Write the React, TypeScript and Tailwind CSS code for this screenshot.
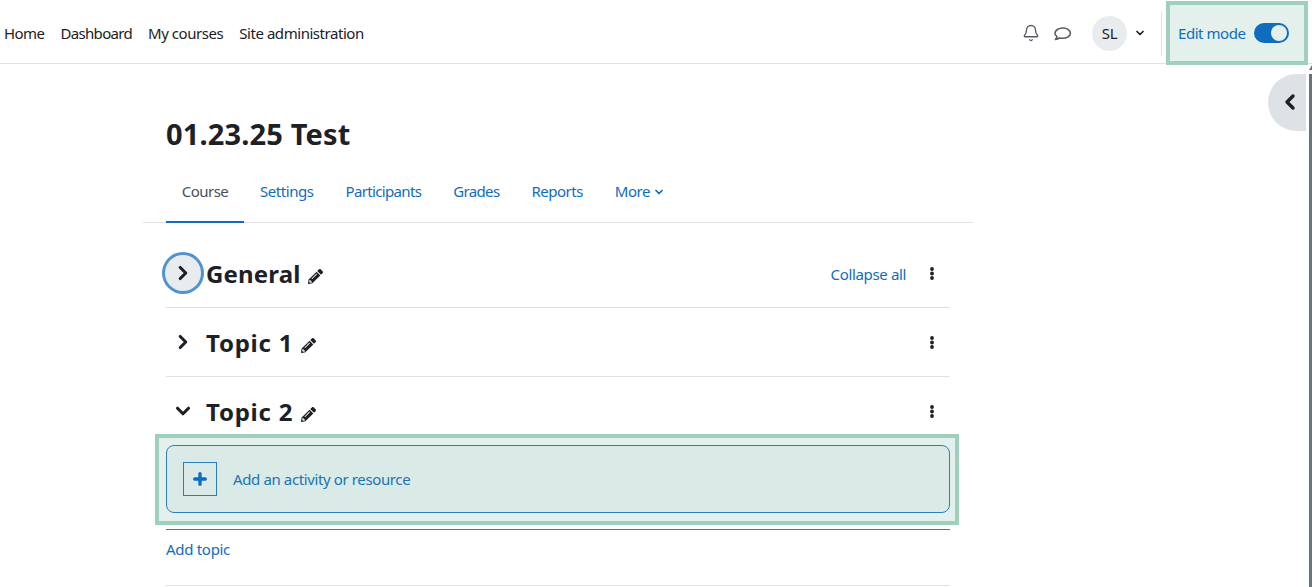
import React from 'react';
import { Bell, ChevronDown, ChevronRight, ChevronLeft, Plus } from 'lucide-react';

const Pencil = ({ className }: { className?: string }) => (
  <svg viewBox="0 0 512 512" className={className} fill="currentColor">
    <path d="M497.9 142.1l-46.1 46.1c-4.7 4.7-12.3 4.7-17 0l-111-111c-4.7-4.7-4.7-12.3 0-17l46.1-46.1c18.7-18.7 49.1-18.7 67.9 0l60.1 60.1c18.8 18.7 18.8 49.1 0 67.9zM284.2 99.8L21.6 362.4.4 483.9c-2.9 16.4 11.4 30.6 27.8 27.8l121.5-21.3 262.6-262.6c4.7-4.7 4.7-12.3 0-17l-111-111c-4.8-4.7-12.4-4.7-17.1 0zM124.1 339.9c-5.5-5.5-5.5-14.3 0-19.8l154-154c5.5-5.5 14.3-5.5 19.8 0s5.5 14.3 0 19.8l-154 154c-5.5 5.5-14.3 5.5-19.8 0zM88 424h48v36.3l-64.5 11.3-31.1-31.1L51.7 376H88v48z" />
  </svg>
);

const Dots = () => (
  <svg viewBox="0 0 4 13" className="h-[13px] w-[4px] text-[#1d2125]" fill="currentColor">
    <circle cx="2" cy="2" r="1.9" />
    <circle cx="2" cy="6.5" r="1.9" />
    <circle cx="2" cy="11" r="1.9" />
  </svg>
);

const Chat = () => (
  <svg viewBox="0 0 18 14" className="ml-[14px] mt-[2px] h-[14px] w-[18px] text-[#555b60]" fill="none" stroke="currentColor" strokeWidth="1.6" strokeLinejoin="round">
    <path d="M9 1C4.6 1 1 3.3 1 6.2c0 1.4.8 2.6 2 3.5-.2 1-.8 2-1.6 2.8 1.6-.1 3-.7 4-1.6.9.3 1.9.4 3 .4 4.4 0 8-2.3 8-5.1S13.4 1 9 1z" />
  </svg>
);

const SectionRow = ({ title, open, focus, right, titleClass }: { title: string; open?: boolean; focus?: boolean; right?: React.ReactNode; titleClass: string }) => (
  <div className="flex h-[68px] items-center">
    <div className={`ml-[-1px] mr-[5px] flex h-[36px] w-[36px] shrink-0 items-center justify-center rounded-full ${focus ? 'bg-[#e9ecef] ring-[3px] ring-[#4f93d1]' : ''}`}>
      {open ? <ChevronDown size={22} strokeWidth={3.4} className="text-[#1d2125]" /> : <ChevronRight size={22} strokeWidth={3.4} className="text-[#1d2125]" />}
    </div>
    <h3 className={`mt-[1px] text-[24px] font-bold leading-none text-[#1d2125] ${titleClass}`}>{title}</h3>
    <Pencil className="ml-[8px] mt-[7px] h-[15px] w-[15px] text-[#1d2125]" />
    <div className="ml-auto flex items-center">
      {right}
      <div className="ml-[24px] mr-[16px] flex">
        <Dots />
      </div>
    </div>
  </div>
);

export default function App() {
  return (
    <div className="relative h-[587px] w-[1312px] overflow-hidden bg-white font-['Noto_Sans',sans-serif] text-[15px] text-[#1d2125]">
      {/* top nav */}
      <nav className="flex h-[64px] items-center border-b border-[#dee2e6] pl-[4px] pt-[3px]">
        <div className="flex gap-[16px]">
          <span className="tracking-[-0.55px]">Home</span>
          <span className="tracking-[-0.68px]">Dashboard</span>
          <span className="tracking-[-0.45px]">My courses</span>
          <span className="tracking-[-0.45px]">Site administration</span>
        </div>
        <div className="ml-auto flex items-center">
          <Bell size={18} strokeWidth={1.8} className="text-[#555b60]" />
          <Chat />
          <div className="ml-[20px] flex h-[35px] w-[35px] items-center justify-center rounded-full bg-[#e9ecef] text-[15px] tracking-[-0.3px]">SL</div>
          <ChevronDown size={12} strokeWidth={3.5} className="ml-[7px]" />
          <div className="ml-[15px] h-[45px] w-px bg-[#dee2e6]" />
          <div className="ml-[4px] mr-[4px] flex h-[64px] w-[142px] items-center border-[4px] border-[#9fd0bd] bg-[#e3f0eb] pl-[8px]">
            <span className="tracking-[-0.45px] text-[#0f6cbf]">Edit mode</span>
            <div className="ml-[8px] flex h-[20px] w-[35px] items-center justify-end rounded-full bg-[#0f6cbf] pr-[2px]">
              <div className="h-[16px] w-[16px] rounded-full bg-[#e3f0eb]" />
            </div>
          </div>
        </div>
      </nav>

      {/* drawer toggle */}
      <div className="absolute left-[1268px] top-[74px] flex h-[57px] w-[38px] items-center rounded-l-full bg-[#dee2e6] pb-[2px] pl-[10px]">
        <ChevronLeft size={24} strokeWidth={3.4} className="text-[#1d2125]" />
      </div>
      <div className="absolute left-[1309px] top-[65px] h-0 w-0 border-x-[3px] border-b-[5px] border-x-transparent border-b-[#6a737b]" />
      <div className="absolute left-[1309px] top-[74px] h-[513px] w-[3px] bg-[#6a737b]" />

      {/* main column */}
      <main className="ml-[143px] w-[830px]">
        <div className="pl-[23px] pt-[52px]">
          <h1 className="text-[29px] font-bold leading-[36px] tracking-[0.15px] text-[#1d2125]">01.23.25 Test</h1>
        </div>
        <div className="mt-[11px] flex h-[60px] border-b border-[#dee2e6] pl-[23px] text-[#0f6cbf]">
          <div className="mb-[-1px] flex w-[78px] items-center justify-center border-b-[2px] border-[#0f6cbf] pb-[2px] tracking-[-0.5px] text-[#495057]">Course</div>
          <div className="ml-[16px] flex items-center pb-[2px] tracking-[-0.45px]">Settings</div>
          <div className="ml-[32px] flex items-center pb-[2px] tracking-[-0.65px]">Participants</div>
          <div className="ml-[32px] flex items-center pb-[2px] tracking-[-0.65px]">Grades</div>
          <div className="ml-[32px] flex items-center pb-[2px] tracking-[-0.5px]">Reports</div>
          <div className="ml-[32px] flex items-center pb-[2px] tracking-[-0.5px]">More<ChevronDown size={12} strokeWidth={3.5} className="ml-[3px]" /></div>
        </div>

        <div className="mx-[23px] mt-[16px]">
          <div className="border-b border-[#dee2e6]">
            <SectionRow
              title="General"
              focus
              titleClass="tracking-[0.15px]"
              right={<span className="mt-[2px] tracking-[-0.35px] text-[#0f6cbf]">Collapse all</span>}
            />
          </div>
          <div className="border-b border-[#dee2e6]">
            <SectionRow title="Topic 1" titleClass="tracking-[0.75px]" />
          </div>
          <SectionRow title="Topic 2" open titleClass="tracking-[0.75px]" />
        </div>

        <div className="relative ml-[12px] mr-[14px] mt-[-11px] border-[4px] border-[#9fd0bd] bg-[#e3f0eb] pb-[8px] pl-[7px] pr-[5px] pt-[7px]">
          <div className="flex h-[68px] items-center rounded-[8px] border border-[#2a7fc0] bg-[#d9eae7] pl-[16px]">
            <div className="flex h-[34px] w-[34px] items-center justify-center border border-[#2a7fc0]">
              <Plus size={18} strokeWidth={4.5} className="text-[#0f6cbf]" />
            </div>
            <span className="ml-[16px] tracking-[-0.38px] text-[#2174b4]">Add an activity or resource</span>
          </div>
        </div>

        <div className="mx-[23px] mt-[4px] h-[57px] border-y border-t-[#2a7fc0] border-b-[#dee2e6] pt-[8px] tracking-[-0.3px] text-[#0f6cbf]">
          Add topic
        </div>
      </main>
    </div>
  );
}
